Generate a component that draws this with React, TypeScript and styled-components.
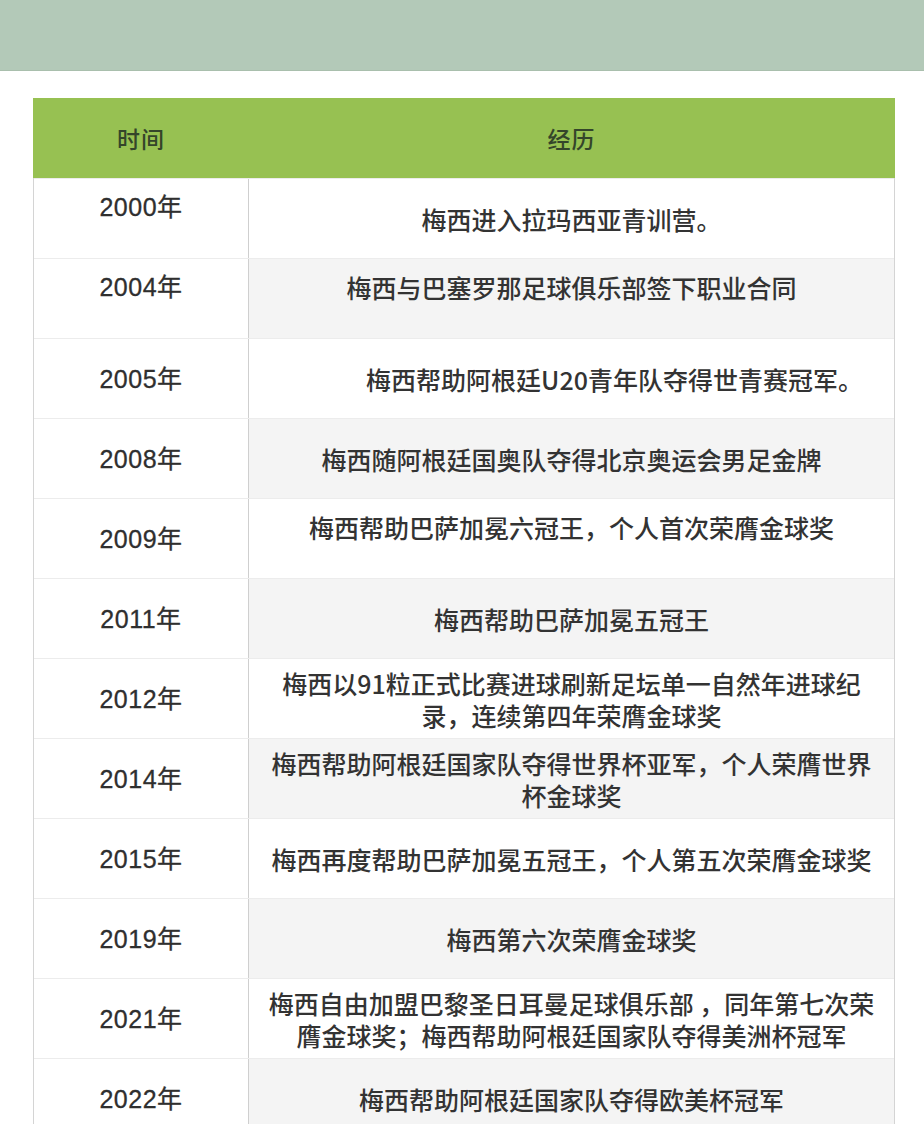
import styled, { createGlobalStyle } from "styled-components";

const GlobalStyle = createGlobalStyle`
  html, body {
    margin: 0;
    padding: 0;
    background: #fff;
  }
  body {
    font-family: "Noto Sans CJK SC", "Noto Sans", sans-serif;
  }
`;

const TopBand = styled.div`
  height: 70px;
  background: #b3c9b8;
  box-shadow: 0 1px 0 #a9bfad;
`;

const Table = styled.div`
  margin: 28px 29px 0 33px;
  border-left: 1px solid #d4d4d4;
  border-right: 1px solid #d4d4d4;
`;

const HeaderRow = styled.div`
  display: grid;
  grid-template-columns: 215px 1fr;
  height: 80px;
  background: #97c152;
  margin: 0 -1px;
`;

const HeaderCell = styled.div<{ $first?: boolean }>`
  display: flex;
  align-items: center;
  justify-content: center;
  font-size: 23px;
  font-weight: 500;
  letter-spacing: 1px;
  color: #34452a;
  padding-left: ${({ $first }) => ($first ? "1px" : "0")};
`;

const Row = styled.div`
  display: grid;
  grid-template-columns: 215px 1fr;
  height: 80px;
  box-sizing: border-box;
  border-top: 1px solid #ececec;
`;

const Cell = styled.div<{ $top?: boolean }>`
  display: flex;
  flex-direction: column;
  align-items: center;
  justify-content: ${({ $top }) => ($top ? "flex-start" : "center")};
  padding-top: ${({ $top }) => ($top ? "12px" : "0")};
  box-sizing: border-box;
  text-align: center;
`;

const YearCell = styled(Cell)`
  background: #fff;
  border-right: 1px solid #cfcfcf;
  font-family: "Liberation Sans", "Noto Sans CJK SC", sans-serif;
  font-size: 25px;
  line-height: 32px;
  letter-spacing: 0.5px;
  color: #2f2f2f;
  -webkit-text-stroke: 0.3px #2f2f2f;
`;

const EventCell = styled(Cell)<{ $shade?: boolean; $indent?: number }>`
  background: ${({ $shade }) => ($shade ? "#f4f4f4" : "#fff")};
  padding-left: ${({ $indent }) => ($indent ? `${$indent}px` : "0")};
  font-size: 25px;
  font-weight: 500;
  color: #333;
`;

const Line = styled.span`
  display: block;
  height: 32px;
  line-height: 32px;
  white-space: pre;
`;

type Entry = {
  year: string;
  lines: string[];
  yearTop?: boolean;
  textTop?: boolean;
  indent?: number;
};

const entries: Entry[] = [
  { year: "2000年", lines: ["梅西进入拉玛西亚青训营。"], yearTop: true },
  { year: "2004年", lines: ["梅西与巴塞罗那足球俱乐部签下职业合同"], yearTop: true, textTop: true },
  { year: "2005年", lines: ["梅西帮助阿根廷U20青年队夺得世青赛冠军。"], indent: 86 },
  { year: "2008年", lines: ["梅西随阿根廷国奥队夺得北京奥运会男足金牌"] },
  { year: "2009年", lines: ["梅西帮助巴萨加冕六冠王，个人首次荣膺金球奖"], textTop: true },
  { year: "2011年", lines: ["梅西帮助巴萨加冕五冠王"] },
  { year: "2012年", lines: ["梅西以91粒正式比赛进球刷新足坛单一自然年进球纪", "录，连续第四年荣膺金球奖"] },
  { year: "2014年", lines: ["梅西帮助阿根廷国家队夺得世界杯亚军，个人荣膺世界", "杯金球奖"] },
  { year: "2015年", lines: ["梅西再度帮助巴萨加冕五冠王，个人第五次荣膺金球奖"] },
  { year: "2019年", lines: ["梅西第六次荣膺金球奖"] },
  { year: "2021年", lines: ["梅西自由加盟巴黎圣日耳曼足球俱乐部 ，同年第七次荣", "膺金球奖；梅西帮助阿根廷国家队夺得美洲杯冠军"] },
  { year: "2022年", lines: ["梅西帮助阿根廷国家队夺得欧美杯冠军"] },
];

export default function App() {
  return (
    <>
      <GlobalStyle />
      <TopBand />
      <Table>
        <HeaderRow>
          <HeaderCell $first>时间</HeaderCell>
          <HeaderCell>经历</HeaderCell>
        </HeaderRow>
        {entries.map((e, i) => (
          <Row key={e.year}>
            <YearCell $top={e.yearTop}>{e.year}</YearCell>
            <EventCell $top={e.textTop} $shade={i % 2 === 1} $indent={e.indent}>
              {e.lines.map((l) => (
                <Line key={l}>{l}</Line>
              ))}
            </EventCell>
          </Row>
        ))}
      </Table>
    </>
  );
}
